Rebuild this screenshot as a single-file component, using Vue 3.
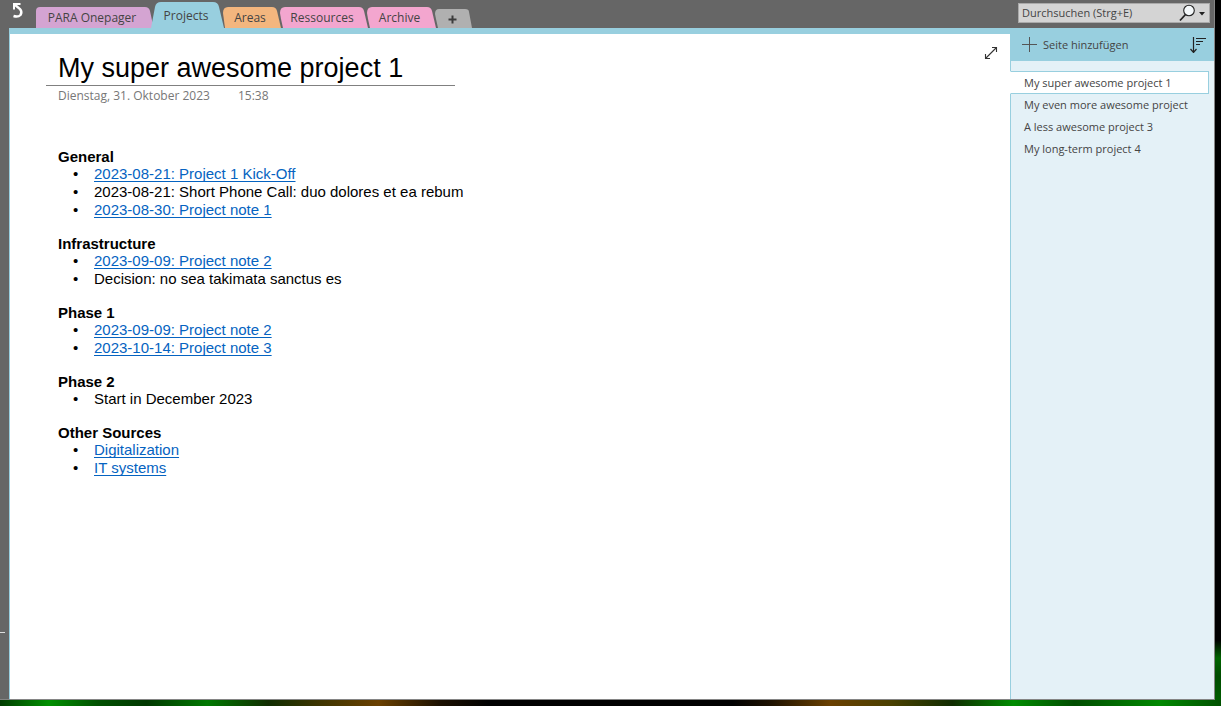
<script setup>
import { ref } from 'vue'

const tabs = [
  { label: 'PARA Onepager', width: 115, fill: '#d4a4d2', path: 'M0 28V11Q0 7 4 7H109Q113 7 114 11L117 25L116 28Z' },
  { label: 'Projects', width: 72, fill: '#98cfdf', path: 'M0 28L4 7Q5 2 10 2H62Q67 2 68 7L73 28Z' },
  { label: 'Areas', width: 57, fill: '#f3b67e', path: 'M2 28L0 13Q0 7 5 7H49Q53 7 54 11L58 28Z' },
  { label: 'Ressources', width: 87, fill: '#f3a6cf', path: 'M3 28L1 19L0 13Q0 7 5 7H79Q83 7 84 11L88 28Z' },
  { label: 'Archive', width: 68, fill: '#f3a6cf', path: 'M3 28L1 19L0 13Q0 7 5 7H60Q64 7 65 11L69 28Z' },
  { label: '', width: 37, fill: '#b0b0b0', path: 'M3 28L1 19L0 14Q0 9 4 9H30Q34 9 34 12L37 28Z' }
]

const pages = [
  'My super awesome project 1',
  'My even more awesome project',
  'A less awesome project 3',
  'My long-term project 4'
]

const sections = [
  {
    title: 'General',
    items: [
      { text: '2023-08-21: Project 1 Kick-Off', link: true },
      { text: '2023-08-21: Short Phone Call: duo dolores et ea rebum' },
      { text: '2023-08-30: Project note 1', link: true }
    ]
  },
  {
    title: 'Infrastructure',
    items: [
      { text: '2023-09-09: Project note 2', link: true },
      { text: 'Decision: no sea takimata sanctus es' }
    ]
  },
  {
    title: 'Phase 1',
    items: [
      { text: '2023-09-09: Project note 2', link: true },
      { text: '2023-10-14: Project note 3', link: true }
    ]
  },
  { title: 'Phase 2', items: [{ text: 'Start in December 2023' }] },
  {
    title: 'Other Sources',
    items: [
      { text: 'Digitalization', link: true },
      { text: 'IT systems', link: true }
    ]
  }
]

const activeTab = ref(1)
const activePage = ref(0)
const query = ref('')
</script>

<template>
  <div class="desktop">
    <div class="window">
      <header class="topbar">
        <button class="back" aria-label="Zurück">
          <svg width="12" height="20" viewBox="0 0 12 20" fill="none" stroke="#fff">
            <path d="M8.500 4H2V9.500" stroke-width="2" />
            <path d="M2.500 4.500L8 9Q10.500 12 8.500 15Q6 17.500 1.500 16" stroke-width="2.4" />
          </svg>
        </button>
        <nav class="tabs">
          <button
            v-for="(tab, i) in tabs"
            :key="i"
            class="tab"
            :class="{ active: i === activeTab, add: !tab.label }"
            :style="{ width: tab.width + 'px' }"
            :aria-label="tab.label || 'Neuer Abschnitt'"
            @click="tab.label && (activeTab = i)"
          >
            <svg class="shape" :width="tab.width" height="28"><path :d="tab.path" :fill="tab.fill" /></svg>
            <span v-if="tab.label" class="label">{{ tab.label }}</span>
            <svg v-else class="label" width="9" height="9" viewBox="0 0 9 9">
              <path d="M4.500 0.500V8.500M0.500 4.500H8.500" stroke="#3c3c3c" stroke-width="2" />
            </svg>
          </button>
        </nav>
        <form class="search" @submit.prevent>
          <input v-model="query" type="search" placeholder="Durchsuchen (Strg+E)" aria-label="Durchsuchen" />
          <button aria-label="Suchen">
            <svg width="30" height="18" viewBox="0 0 30 18">
              <path d="M6.500 10.500L1 16.500" stroke="#222" stroke-width="1.8" fill="none" />
              <circle cx="10" cy="6.500" r="5.300" fill="#f4f8fa" stroke="#222" stroke-width="1.1" />
              <path d="M20 8H26L23 11.500Z" fill="#222" />
            </svg>
          </button>
        </form>
      </header>

      <div class="body">
        <div class="rail"><span class="mark"></span></div>
        <main class="page">
          <button class="expand" aria-label="Ganzseitenansicht">
            <svg width="14" height="14" viewBox="0 0 14 14" fill="none" stroke="#333" stroke-width="1.1">
              <path d="M1.500 12.500L12.500 1.500M8 1.500H12.500V6M1.500 8V12.500H6" />
            </svg>
          </button>
          <article>
            <h1>My super awesome project 1</h1>
            <p class="stamp"><span>Dienstag, 31. Oktober 2023</span><span>15:38</span></p>
            <section v-for="s in sections" :key="s.title">
              <h2>{{ s.title }}</h2>
              <ul>
                <li v-for="item in s.items" :key="item.text">
                  <a v-if="item.link" href="#">{{ item.text }}</a>
                  <template v-else>{{ item.text }}</template>
                </li>
              </ul>
            </section>
          </article>
        </main>
        <aside class="sidebar">
          <div class="actions">
            <button class="add-page">
              <svg width="15" height="15" viewBox="0 0 15 15"><path d="M7.500 0V15M0 7.500H15" stroke="#555" /></svg>
              Seite hinzufügen
            </button>
            <button class="sort" aria-label="Sortieren">
              <svg width="16" height="16" viewBox="0 0 16 16" fill="none" stroke="#222" stroke-width="1.2">
                <path d="M3.500 0V15M0.500 12L3.500 15.500L6.500 12M6 1.500H16M6 4.500H13M6 7.500H10" />
              </svg>
            </button>
          </div>
          <nav class="pages">
            <button
              v-for="(page, i) in pages"
              :key="page"
              :class="{ selected: i === activePage }"
              @click="activePage = i"
            >{{ page }}</button>
          </nav>
        </aside>
      </div>
    </div>
  </div>
</template>

<style>
body { margin: 0; }
</style>

<style scoped>
* { box-sizing: border-box; }
button {
  border: 0;
  padding: 0;
  background: none;
  font: inherit;
  color: inherit;
  cursor: pointer;
}
svg { display: block; flex: none; }

.desktop {
  min-height: 100vh;
  display: flex;
  padding: 0 6px 6px 0;
  font: 12px/16px "Open Sans", "Noto Sans", sans-serif;
  color: #444;
  background:
    linear-gradient(90deg, #003c00 0%, #009000 4%, #005000 8%, #003800 12%, #007800 17%, #102c00 22%, #3c3400 26%, #6a4000 31%, #1c1000 36%, #000 40%, #000 60%, #1c1000 63%, #6a4000 68%, #4a4000 73%, #102c00 78%, #008c00 83%, #004c00 88%, #008800 95%, #005000 100%) bottom / 100% 6px no-repeat,
    linear-gradient(0deg, #006000 0, #004c00 30px, #006400 48px, #000 66px);
}
.window {
  flex: 1;
  min-width: 0;
  display: flex;
  flex-direction: column;
  background: #666;
  border: solid #858585;
  border-width: 0 1px 1px 0;
}

.topbar {
  display: flex;
  height: 28px;
}
.back {
  width: 36px;
  padding-left: 12px;
  display: flex;
  align-items: flex-start;
}
.tabs { display: flex; flex: 1; }
.tab {
  position: relative;
  display: flex;
  justify-content: center;
  align-items: center;
  padding: 8px 3px 0 0;
}
.tab.active { z-index: 1; padding: 4px 2px 0 0; }
.shape {
  position: absolute;
  left: 0;
  top: 0;
  overflow: visible;
}
.label { position: relative; }
.tab.add { padding-top: 10px; }

.search {
  display: flex;
  align-items: center;
  width: 192px;
  height: 20px;
  margin: 3px 4px 0 0;
  background: #d4d4d4;
  border: 1px solid #aaa;
}
.search input {
  flex: 1;
  min-width: 0;
  padding: 0 3px;
  border: 0;
  outline: 0;
  background: none;
  font: inherit;
  font-size: 11px;
  color: #444;
}
.search input::placeholder { color: #444; opacity: 1; }

.body {
  flex: 1;
  display: flex;
}
.rail {
  width: 9px;
  display: flex;
  align-items: flex-end;
  padding-bottom: 66px;
}
.mark { width: 5px; height: 1px; background: #ddd; }
.page {
  position: relative;
  flex: 1;
  min-width: 0;
  background: #fff;
  border-top: 6px solid #98cfdf;
  border-left: 1px solid #98cfdf;
}
.expand {
  position: absolute;
  top: 12px;
  right: 12px;
}
article {
  padding: 17px 0 0 48px;
  font: 15px/18px "Liberation Sans", Arial, sans-serif;
  color: #000;
}
h1 {
  width: 409px;
  margin: 0 0 0 -12px;
  padding: 0 0 0 12px;
  border-bottom: 1px solid #808080;
  font-size: 27px;
  line-height: 34px;
  font-weight: 400;
}
.stamp {
  display: flex;
  gap: 28px;
  margin: 2px 0 44px;
  font: 12px/16px "Open Sans", "Noto Sans", sans-serif;
  color: #777;
}
section { margin-bottom: 16px; }
h2 {
  margin: 0;
  font-size: 15px;
  line-height: 17px;
}
ul {
  margin: 0;
  padding-left: 15px;
  list-style: none;
}
li { display: flex; }
li::before {
  content: "•";
  width: 21px;
}
a {
  color: #0563c1;
  text-underline-offset: 2px;
  text-decoration-thickness: 1px;
  text-decoration-skip-ink: none;
}

.sidebar {
  width: 204px;
  background: #e4f1f7;
  border-left: 1px solid #98cfdf;
}
.actions {
  display: flex;
  justify-content: space-between;
  align-items: center;
  height: 33px;
  padding: 0 8px 0 11px;
  background: #98cfdf;
}
.add-page {
  display: flex;
  align-items: center;
  gap: 6px;
  font-size: 11px;
}
.pages {
  display: flex;
  flex-direction: column;
  padding: 10px 5px 0 0;
  font-size: 11px;
}
.pages button {
  height: 22px;
  padding-left: 13px;
  text-align: left;
  white-space: nowrap;
}
.pages .selected {
  height: 23px;
  margin-left: -1px;
  background: #fff;
  border: 1px solid #98cfdf;
  border-left: 1px solid #fff;
}
</style>
